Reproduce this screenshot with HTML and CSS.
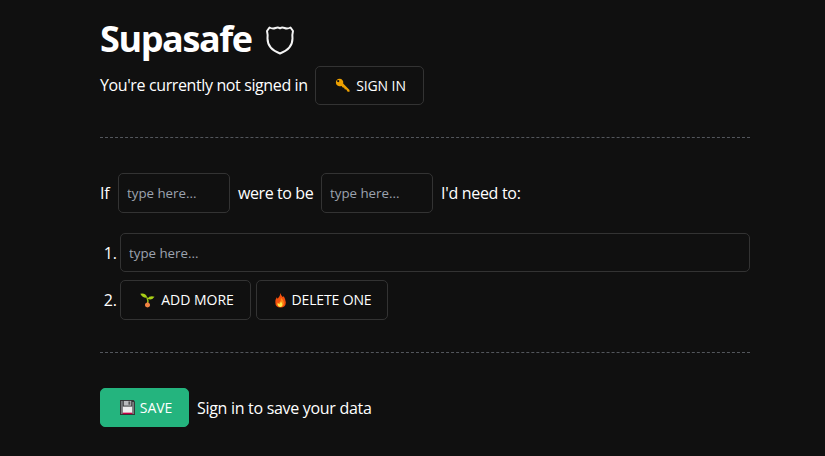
FILE: index.html
```html
<!DOCTYPE html>
<html lang="en">
<head>
<meta charset="utf-8">
<title>Supasafe</title>
<link rel="stylesheet" href="styles.css">
</head>
<body>
<main class="page">
  <h1 class="title"><span class="name">Supasafe</span>
    <svg class="shield" viewBox="0 0 30 30" fill="none" stroke="#f4f4f4" stroke-width="2" stroke-linejoin="round"><path d="M4.500 2.500Q7.500 4.200 10.500 3Q13 2 15 3.300Q17 2 19.500 3Q22.500 4.200 25.500 2.500L28 6Q27 10 27.500 13.500C27.500 20 23 25.500 15 28.500C7 25.500 2.500 20 2.500 13.500Q3 10 2 6Z"/></svg>
  </h1>
  <div class="row account">
    <span class="status">You're currently not signed in</span>
    <button class="btn signin"><svg class="icon" viewBox="0 0 16 16"><path fill="#eda000" fill-rule="evenodd" d="M4.800.8A4 4 0 1 0 5.800 8.700L7 8.500L8.200 10.200L9.800 10.500L10.300 12L12 12.300L13.500 14.700H15.500V12.700L8.700 5.900A4 4 0 0 0 4.800.8ZM2.200 3.300A1.200 1.200 0 1 0 4.600 3.300A1.200 1.200 0 1 0 2.200 3.300Z"/></svg><span>SIGN IN</span></button>
  </div>
  <hr class="rule">
  <div class="row sentence">
    <span class="if">If</span><input class="field" placeholder="type here...">
    <span class="were">were to be</span><input class="field" placeholder="type here...">
    <span class="need">I'd need to:</span>
  </div>
  <div class="steps">
    <span class="num">1.</span><input class="field wide" placeholder="type here...">
    <span class="num">2.</span>
    <div class="actions">
      <button class="btn add"><svg class="icon" viewBox="0 0 16 16"><path d="M8 12Q9 8 7.500 5" fill="none" stroke="#9bc514" stroke-width="1.500"/><path fill="#a9cf16" d="M.3.8Q6-.5 7.800 5Q3 6 .3.800ZM8 6.200Q10 2.500 15.500 4Q12.500 8.500 8 6.200Z"/><path fill="#f18443" d="M8 9.500L10.500 11.500Q11.500 15 8 15.500Q4.500 15 5.500 11.500Z"/></svg><span>ADD MORE</span></button>
      <button class="btn delete"><svg class="icon" viewBox="0 0 16 16"><path fill="#f3500d" d="M8 0Q8.300 2.500 10.300 4.300L11.500 3.500Q13.500 7 13.700 10Q13.500 15 8 15.500Q2.500 15 2.500 10Q2.300 7 4 4.500L5 6Q7.500 4 8 0Z"/><path fill="#ff8a16" d="M8.500 5Q12 8 11.500 12Q10 15 8 15Q4 14 4.500 10L6 11Q9 8 8.500 5Z"/><path fill="#ffe94a" d="M8.500 9Q11.500 13 8.500 15Q4.500 15 5 11L7 12Z"/></svg><span>DELETE ONE</span></button>
    </div>
  </div>
  <hr class="rule">
  <div class="row">
    <button class="btn save"><svg class="icon" viewBox="0 0 16 16"><path fill="#343536" d="M0 0H14.500L16 1.500V16H0Z"/><path fill="#777b7c" d="M1 1H3V15H1ZM13 2H15V15H13Z"/><path fill="#b9bbbd" d="M4 1H12V6H4Z"/><path fill="#555" d="M9 1.500H11V5H9Z"/><path fill="#eee" d="M3 7H13V14H3Z"/><path fill="#c90045" d="M3 13.500H13V15H3Z"/></svg><span>SAVE</span></button>
    <span class="hint">Sign in to save your data</span>
  </div>
</main>
</body>
</html>
```

FILE: styles.css
```css
* { box-sizing: border-box; }
body { margin: 0; background: #101010; color: #fff; font: 16px/24px "Open Sans", "Noto Sans", sans-serif; }
.page { width: 650px; margin-left: 100px; padding-top: 18px; }
.title { display: flex; align-items: center; gap: 13px; height: 42px; margin: 0 0 6px; font-size: 36px; line-height: 42px; font-weight: 700; }
.name { width: 152px; letter-spacing: -1.4px; white-space: nowrap; }
.shield { width: 30px; height: 30px; margin-top: 2px; }
.row { display: flex; align-items: center; gap: 8px; height: 39px; white-space: nowrap; }
.row > span { letter-spacing: -.3px; }
.row > .status { width: 207px; letter-spacing: -.38px; padding-bottom: 2px; }
.btn { display: flex; align-items: center; justify-content: center; gap: 6px; height: 39px; padding: 0; border: 1px solid #333; border-radius: 5px; background: transparent; color: #fff; font: 14px/20px "Open Sans", "Noto Sans", sans-serif; letter-spacing: -.1px; white-space: nowrap; }
.icon { width: 15px; height: 15px; flex: none; }
.signin { width: 109px; padding-left: 2px; }
.rule { height: 0; margin: 32px 0 35px; border: 0; border-top: 1px dashed #53565c; }
.sentence { height: 40px; }
.if { width: 10px; }
.row > .were { width: 75px; letter-spacing: -.4px; }
.field { width: 112px; height: 40px; padding: 0 8px; border: 1px solid #333; border-radius: 5px; background: transparent; color: #fff; font: 13.3px "Open Sans", "Noto Sans", sans-serif; }
.field::placeholder { color: #9ca3af; opacity: 1; }
.steps { display: grid; grid-template-columns: 17px 630px; grid-template-rows: 39px 40px; column-gap: 3px; row-gap: 8px; align-items: center; margin-top: 20px; }
.num { text-align: right; }
.wide { width: 630px; height: 39px; }
.actions { display: flex; gap: 5px; }
.actions .btn { height: 40px; }
.add { width: 131px; padding-left: 3px; letter-spacing: 0; }
.delete { width: 132px; gap: 4px; letter-spacing: -.15px; }
.save { width: 89px; padding-left: 3px; gap: 5px; border-color: #24b47e; background: #24b47e; }
```
